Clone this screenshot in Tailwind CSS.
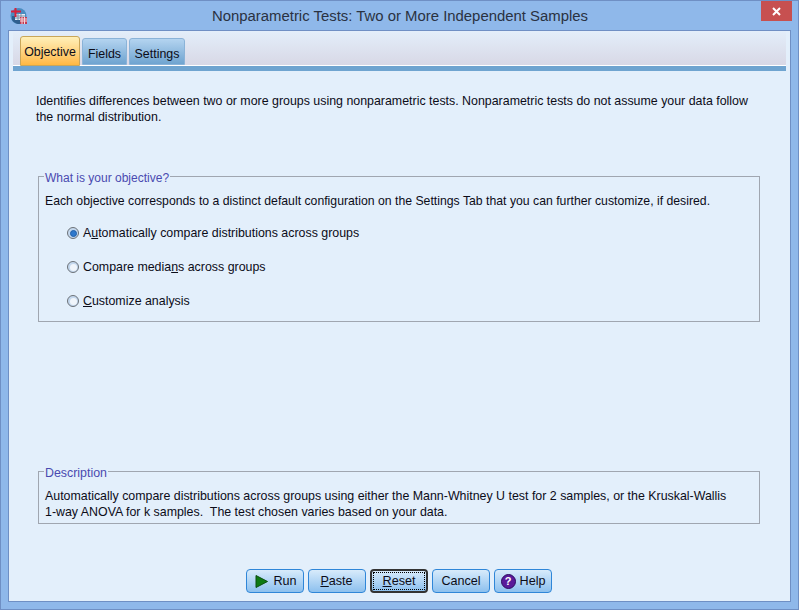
<!DOCTYPE html>
<html lang="en">
<head>
    <meta charset="UTF-8">
    <title>Nonparametric Tests: Two or More Independent Samples</title>
    <script src="https://cdn.jsdelivr.net/npm/@tailwindcss/browser@4"></script>
</head>
<body class="w-[799px] h-[610px] overflow-hidden bg-[#8fb8ea] font-['Liberation_Sans',sans-serif] text-[12.4px] leading-[16px] text-[#0c0c18]">
<div class="w-[799px] h-[610px] border border-[#6f8fc4] flex flex-col">
    <!-- Title bar -->
    <div class="h-[29px] flex shrink-0 relative">
        <div class="w-[36px] pl-[9px] pt-[6px]">
            <svg width="18" height="18" viewBox="0 0 18 18">
                <circle cx="8.500" cy="9" r="8" fill="#4a8cc0"/>
                <path d="M2 13a8 8 0 0 0 11 3V9H2z" fill="#2f5f8f"/>
                <rect x="5" y="7" width="10" height="6" fill="#e8eef5"/>
                <path d="M5 9h10M5 11h10M8 7v6M11 7v6" stroke="#7a8fa8" stroke-width="1"/>
                <path d="M5.500 1v9M1 4.500h10" stroke="#d8203a" stroke-width="2"/>
                <rect x="10" y="10" width="7" height="7" fill="#c23a52"/>
                <path d="M10 12h7M10 14h7M12 10v7M14.500 10v7" stroke="#f3d5da" stroke-width="1"/>
            </svg>
        </div>
        <div class="flex-1 text-center text-[14.9px] leading-[30px] text-[#2a3242] pl-[2px]">Nonparametric Tests: Two or More Independent Samples</div>
        <div class="w-[31px] h-[20px] mr-[6px] bg-[#c75050] flex items-center justify-center">
            <svg width="9" height="9" viewBox="0 0 9 9"><path d="M1 1l7 7M8 1l-7 7" stroke="#fff" stroke-width="2"/></svg>
        </div>
    </div>

    <!-- Client area -->
    <div class="w-[783px] h-[572px] ml-[7px] border border-[#6f8fc4] bg-[#e3effb] flex flex-col">
        <!-- Tab strip -->
        <div class="h-[40px] mx-[4px] shrink-0">
            <div class="h-[35px] pt-[6px] pl-[7px] flex gap-[2px] items-end border-b border-white bg-gradient-to-b from-[#e3eefa] to-[#d8d8e6]">
                <div class="w-[60px] h-[30px] -mb-[1px] rounded-t-[3px] border border-[#c9a659] bg-gradient-to-b from-[#fff0b8] to-[#ffb840] text-center leading-[30px]">Objective</div>
                <div class="w-[45px] h-[27px] rounded-t-[3px] border border-[#8ab3d8] bg-gradient-to-b from-[#b4d4f0] to-[#6fa4d0] text-center leading-[31px]">Fields</div>
                <div class="w-[56px] h-[27px] rounded-t-[3px] border border-[#8ab3d8] bg-gradient-to-b from-[#b4d4f0] to-[#6fa4d0] text-center leading-[31px]">Settings</div>
            </div>
            <div class="h-[5px] bg-[#6fa4d0]"></div>
        </div>

        <div class="px-[27px] pt-[22px] h-[93px] shrink-0">
            Identifies differences between two or more groups using nonparametric tests. Nonparametric tests do not assume your data follow<br>the normal distribution.
        </div>

        <div class="pl-[29px] pr-[30px] pt-[3px] shrink-0">
            <fieldset class="h-[155px] border border-[#a0a6b0] px-[6px]">
                <legend class="ml-[-1px] px-[1px] pt-[4px] text-[#4a4ab0] text-[12px] leading-[15px]">What is your objective?</legend>
                <p class="mt-[7px] text-[12.25px]">Each objective corresponds to a distinct default configuration on the Settings Tab that you can further customize, if desired.</p>
                <div class="pl-[22px] pt-[16px] flex flex-col gap-[18px]">
                    <label class="flex items-center gap-[4px]">
                        <span class="w-[12px] h-[12px] rounded-full border border-[#6d7278] bg-[#c4d8ee] flex items-center justify-center"><span class="w-[7px] h-[7px] rounded-full bg-[#2e78cc] border border-[#1f5ea8]"></span></span>
                        <span>A<u>u</u>tomatically compare distributions across groups</span>
                    </label>
                    <label class="flex items-center gap-[4px]">
                        <span class="w-[12px] h-[12px] rounded-full border border-[#6d7278] bg-[#c4d8ee] flex items-center justify-center"><span class="w-[7px] h-[7px] rounded-full bg-[#f0f5fb]"></span></span>
                        <span>Compare media<u>n</u>s across groups</span>
                    </label>
                    <label class="flex items-center gap-[4px]">
                        <span class="w-[12px] h-[12px] rounded-full border border-[#6d7278] bg-[#c4d8ee] flex items-center justify-center"><span class="w-[7px] h-[7px] rounded-full bg-[#f0f5fb]"></span></span>
                        <span><u>C</u>ustomize analysis</span>
                    </label>
                </div>
            </fieldset>
        </div>

        <div class="pl-[29px] pr-[30px] pt-[140px] shrink-0">
            <fieldset class="h-[62px] border border-[#a0a6b0] px-[6px]">
                <legend class="ml-[-1px] px-[1px] pt-[4px] text-[#4a4ab0] leading-[15px]">Description</legend>
                <p class="mt-[7px]">Automatically compare distributions across groups using either the Mann-Whitney U test for 2 samples, or the Kruskal-Wallis<br>1-way ANOVA for k samples.&nbsp; The test chosen varies based on your data.</p>
            </fieldset>
        </div>

        <!-- Buttons -->
        <div class="flex justify-center gap-[4px] pt-[45px] pr-[2px] text-[12.6px]">
            <button class="w-[58px] h-[24px] rounded-[4px] border border-[#2f86d8] bg-gradient-to-b from-[#d8ebfb] to-[#8cc0ee] flex items-center justify-center gap-[5px] pl-[3px]">
                <svg width="13" height="13" viewBox="0 0 13 13"><path d="M1 0.500L12.500 6.500L1 12.500z" fill="#0d7a12" stroke="#0a4f10"/></svg>
                <span>Run</span>
            </button>
            <button class="w-[58px] h-[24px] rounded-[4px] border border-[#2f86d8] bg-gradient-to-b from-[#d8ebfb] to-[#8cc0ee]"><u>P</u>aste</button>
            <button class="w-[58px] h-[24px] rounded-[4px] border-2 border-[#333] bg-gradient-to-b from-[#d8ebfb] to-[#8cc0ee] p-[1px]"><span class="block h-full leading-[16px] border border-dotted border-black pl-[1px]"><u>R</u>eset</span></button>
            <button class="w-[58px] h-[24px] rounded-[4px] border border-[#2f86d8] bg-gradient-to-b from-[#d8ebfb] to-[#8cc0ee] pl-[1px]">Cancel</button>
            <button class="w-[58px] h-[24px] rounded-[4px] border border-[#2f86d8] bg-gradient-to-b from-[#d8ebfb] to-[#8cc0ee] flex items-center justify-center gap-[4px] pl-[1px]">
                <span class="w-[15px] h-[15px] rounded-full bg-[#5a1a9a] border border-[#2e0a60] text-white font-bold text-[11px] leading-[13px]">?</span>
                <span>Help</span>
            </button>
        </div>
    </div>
</div>
</body>
</html>
